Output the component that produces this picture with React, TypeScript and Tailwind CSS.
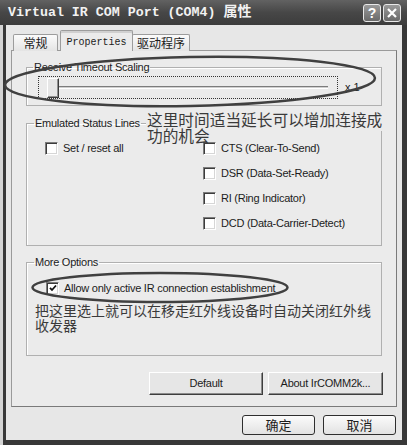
import React from "react";

function Box({ checked }: { checked?: boolean }) {
  return (
    <span className="flex w-[13px] h-[13px] shrink-0 items-center justify-center border border-t-[#7c7c7c] border-l-[#7c7c7c] border-b-white border-r-white bg-white shadow-[inset_1px_1px_0_#3c3c3c,inset_-1px_-1px_0_#d6d6d6]">
      {checked && (
        <svg width="8" height="8" viewBox="0 0 8 8">
          <path d="M1 3.8 L3 6 L7 1.5" stroke="#111" strokeWidth="1.8" fill="none" />
        </svg>
      )}
    </span>
  );
}

function Check({ label, checked }: { label: string; checked?: boolean }) {
  return (
    <div className="flex items-center h-[25px] gap-[5px]">
      <Box checked={checked} />
      <span className="tracking-[-0.25px]">{label}</span>
    </div>
  );
}

export default function App() {
  return (
    <div className="relative w-[407px] h-[445px] overflow-hidden bg-[#d4d4d4] font-['Liberation_Sans','Noto_Sans_CJK_SC',sans-serif] text-[11px] text-[#1c1c1c]">
      {/* Title bar */}
      <div className="flex items-center h-[25px] bg-linear-to-b from-[#626262] via-[#474747] to-[#3c3c3c] pl-[8px] pr-[6px]">
        <span className="font-['Liberation_Mono','Noto_Sans_CJK_SC',monospace] font-bold text-[13.3px] text-[#f2f2f2] whitespace-pre">
          Virtual IR COM Port (COM4) <span className="text-[14px]">属性</span>
        </span>
        <div className="ml-auto flex gap-[2px]">
          <div className="flex w-[18px] h-[18px] items-center justify-center rounded-[3px] border border-[#e8e8e8] bg-linear-to-b from-[#9a9a9a] to-[#6a6a6a] text-white font-bold text-[14px] leading-none">
            ?
          </div>
          <div className="flex w-[18px] h-[18px] items-center justify-center rounded-[3px] border border-[#e8e8e8] bg-linear-to-b from-[#9a9a9a] to-[#6a6a6a]">
            <svg width="12" height="12" viewBox="0 0 12 12">
              <path d="M2 2 L10 10 M10 2 L2 10" stroke="#fff" strokeWidth="2.2" />
            </svg>
          </div>
        </div>
      </div>

      {/* Body */}
      <div className="ml-[3px] h-[420px] flex flex-col bg-[#e7e7e7] border-l-[3px] border-r-[5px] border-b-[5px] border-[#383838] pt-[5px]">
        {/* Tabs */}
        <div className="relative z-10 -mb-px flex items-end h-[21px] pl-[7px]">
          <div className="flex items-center justify-center w-[45px] h-[17px] border border-b-0 border-[#9c9c9c] rounded-t-[2px] bg-linear-to-b from-[#fbfbfb] to-[#e4e4e4] text-[12px] font-['Noto_Sans_CJK_SC',sans-serif]">
            常规
          </div>
          <div className="ml-[2px] flex items-center justify-center pt-[2px] w-[73px] h-[21px] border border-b-0 border-[#9c9c9c] rounded-t-[2px] bg-[#ebebeb] shadow-[inset_0_2px_0_#d0d0d0] font-['Liberation_Mono',monospace] text-[10px]">
            Properties
          </div>
          <div className="-ml-px flex items-center justify-center w-[58px] h-[17px] border border-b-0 border-[#9c9c9c] rounded-t-[2px] bg-linear-to-b from-[#fbfbfb] to-[#e4e4e4] text-[12px] font-['Noto_Sans_CJK_SC',sans-serif]">
            驱动程序
          </div>
        </div>

        {/* Panel */}
        <div className="mx-[5px] h-[357px] border border-[#9a9a9a] border-r-[#7a7a7a] border-b-[#7a7a7a] bg-[#ebebeb] pt-[10px] px-[14px] flex flex-col">
          <fieldset className="border border-[#b0b0b0] shadow-[inset_1px_1px_0_#fff] pb-[6px]">
            <legend className="ml-[6px] px-[1px] leading-[13px] tracking-[-0.25px]">Receive Timeout Scaling</legend>
            <div className="flex items-center ml-[11px] pt-[2px]">
              <div className="flex items-center w-[300px] h-[23px] border border-dotted border-[#333] pl-[8px]">
                <div className="w-[12px] h-[20px] bg-[#e6e6e6] border border-t-white border-l-white border-b-[#3c3c3c] border-r-[#3c3c3c] shadow-[inset_-1px_-1px_0_#909090]" />
                <div className="w-[269px] h-[3px] border-t border-t-[#7c7c7c] border-b border-b-white bg-[#cfcfcf]" />
              </div>
              <span className="ml-[7px]">x 1</span>
            </div>
          </fieldset>

          <fieldset className="mt-[11px] border border-[#b0b0b0] shadow-[inset_1px_1px_0_#fff] pt-[6px] pb-[9px]">
            <legend className="ml-[7px] px-[1px] leading-[13px] tracking-[-0.25px]">Emulated Status Lines</legend>
            <div className="flex ml-[18px]">
              <div className="w-[158px]">
                <Check label="Set / reset all" />
              </div>
              <div className="flex flex-col">
                <Check label="CTS (Clear-To-Send)" />
                <Check label="DSR (Data-Set-Ready)" />
                <Check label="RI (Ring Indicator)" />
                <Check label="DCD (Data-Carrier-Detect)" />
              </div>
            </div>
          </fieldset>

          <fieldset className="mt-[10px] border border-[#b0b0b0] shadow-[inset_1px_1px_0_#fff] pt-[11px] pb-[22px]">
            <legend className="ml-[7px] px-[1px] leading-[13px] tracking-[-0.25px]">More Options</legend>
            <div className="flex items-center h-[16px] ml-[19px] gap-[5px]">
              <Box checked />
              <span className="tracking-[-0.25px]">Allow only active IR connection establishment</span>
            </div>
            <div className="mt-[7px] ml-[8px] text-[14px] leading-[15px] text-[#3a3a3a] font-['Noto_Sans_CJK_SC',sans-serif] whitespace-nowrap">
              把这里选上就可以在移走红外线设备时自动关闭红外线
              <br />
              收发器
            </div>
          </fieldset>

          <div className="mt-[16px] flex justify-end gap-[5px] -mr-px">
            <div className="flex items-center justify-center w-[114px] h-[23px] bg-[#e6e6e6] border border-t-white border-l-white border-b-[#3e3e3e] border-r-[#3e3e3e] shadow-[inset_-1px_-1px_0_#8c8c8c] tracking-[-0.25px]">
              Default
            </div>
            <div className="flex items-center justify-center w-[115px] h-[23px] bg-[#e6e6e6] border border-t-white border-l-white border-b-[#3e3e3e] border-r-[#3e3e3e] shadow-[inset_-1px_-1px_0_#8c8c8c] tracking-[-0.25px]">
              About IrCOMM2k...
            </div>
          </div>
        </div>

        {/* Bottom buttons */}
        <div className="mt-[8px] flex justify-end gap-[8px] pr-[6px]">
          <div className="flex items-center justify-center w-[73px] h-[20px] rounded-[3px] border border-[#2e2e2e] bg-linear-to-b from-[#fbfbfb] to-[#e2e2e2] text-[13px] font-['Noto_Sans_CJK_SC',sans-serif]">
            确定
          </div>
          <div className="flex items-center justify-center w-[73px] h-[20px] rounded-[3px] border border-[#2e2e2e] bg-linear-to-b from-[#fbfbfb] to-[#e2e2e2] text-[13px] font-['Noto_Sans_CJK_SC',sans-serif]">
            取消
          </div>
        </div>
      </div>

      {/* Annotation overlay */}
      <div className="absolute left-[146px] top-[112px] z-20 text-[15.7px] leading-[16px] text-[#3a3a3a] font-['Noto_Sans_CJK_SC',sans-serif] whitespace-nowrap">
        <span className="bg-[#ebebeb] px-[1px]">这里时间适当延长可以增加连接成</span>
        <br />
        <span className="px-[1px]">功的机会</span>
      </div>

      <svg className="absolute inset-0 z-30 pointer-events-none" width="407" height="445" viewBox="0 0 407 445">
        <ellipse cx="190" cy="81.5" rx="185" ry="24.5" transform="rotate(-1.1 190 81.5)" stroke="#404040" strokeWidth="2.5" fill="none" />
        <ellipse cx="160" cy="287.5" rx="127.5" ry="14.5" stroke="#404040" strokeWidth="2.5" fill="none" />
      </svg>
    </div>
  );
}
